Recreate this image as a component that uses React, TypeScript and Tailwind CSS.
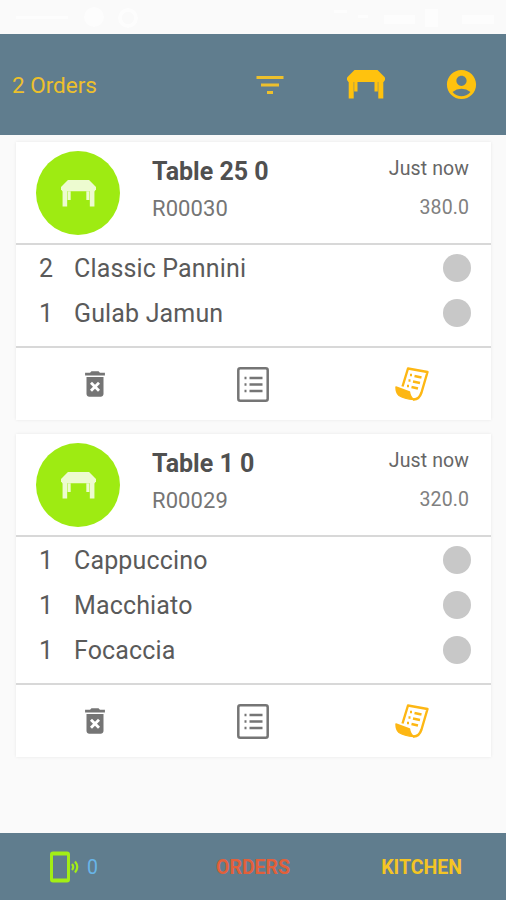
import { MdAccountCircle, MdDeleteForever, MdFilterList } from 'react-icons/md';

interface OrderItem {
  qty: number;
  name: string;
}

interface Order {
  id: string;
  table: string;
  time: string;
  total: string;
  items: OrderItem[];
}

const ORDERS: Order[] = [
  {
    id: 'R00030',
    table: 'Table 25 0',
    time: 'Just now',
    total: '380.0',
    items: [
      { qty: 2, name: 'Classic Pannini' },
      { qty: 1, name: 'Gulab Jamun' },
    ],
  },
  {
    id: 'R00029',
    table: 'Table 1 0',
    time: 'Just now',
    total: '320.0',
    items: [
      { qty: 1, name: 'Cappuccino' },
      { qty: 1, name: 'Macchiato' },
      { qty: 1, name: 'Focaccia' },
    ],
  },
];

function TableIcon({ className }: { className?: string }) {
  return (
    <svg viewBox="0 0 38 29" preserveAspectRatio="none" fill="currentColor" className={className}>
      <path d="M7.500 0h23L38 7.500V10l-1.500 2h-35L0 10V7.500z" />
      <path d="M1.700 11h5v17.500h-5zM31.300 11h5v17.500h-5zM7.200 12h3.300v9.500H7.200zM27.500 12h3.300v9.500h-3.300z" />
    </svg>
  );
}

function StatusIcons() {
  return (
    <svg viewBox="0 0 506 34" fill="#fff" className="h-[34px] w-full opacity-60">
      <path d="M16 16h52v3H16zM334 10h13v3h-13zM358 15h10v3h-10zM384 15h31v9h-31zM425 9h13v18h-13zM462 15h32v9h-32z" />
      <circle cx="94" cy="17" r="10" />
      <circle cx="128" cy="18" r="8" fill="none" stroke="#fff" strokeWidth="4" />
    </svg>
  );
}

function ListIcon() {
  return (
    <svg viewBox="0 0 32 35" className="h-[35px] w-8 text-[#757575]">
      <rect x="1.300" y="1.300" width="29.400" height="32.400" rx="2" fill="none" stroke="currentColor" strokeWidth="2.500" />
      <path
        d="M7.500 11h2M12.500 11H25.500M7.500 17.500h2M12.500 17.500H25.500M7.500 24h2M12.500 24H25.500"
        stroke="currentColor"
        strokeWidth="2.400"
      />
    </svg>
  );
}

function ReceiptIcon() {
  return (
    <svg viewBox="0 0 36 36" fill="none" stroke="currentColor" className="size-9 text-[#fdb714]">
      <path d="M8.500 20.500 14 2.500l19.500 3.500-6 20.500q-2.500 7.500-8.500 7" strokeWidth="2.400" strokeLinejoin="round" />
      <path
        d="M2 21l13.500 5q.5 5 4.500 7.500Q10 33 5 29.500 2 27 2 21z"
        fill="currentColor"
        strokeWidth="1.500"
        strokeLinejoin="round"
      />
      <path d="M16 9h2M20.500 10l7 1.500M14.500 14.500h2M19 15.500l7 1.500M13 20h2M17.500 21l6.500 1.500" strokeWidth="2.600" />
    </svg>
  );
}

function PhoneIcon() {
  return (
    <svg viewBox="0 0 30 32" fill="none" stroke="currentColor" className="h-8 w-[30px] text-[#a2ee16]">
      <rect x="1.500" y="2" width="17" height="28" rx="1.500" strokeWidth="3" />
      <path d="M1 3h18M1 29h18" strokeWidth="3" />
      <path d="M22 13q2.500 3 0 6M25 10.500q4.500 5.500 0 11" strokeWidth="2.200" />
    </svg>
  );
}

function OrderCard({ order }: { order: Order }) {
  return (
    <article className="bg-white shadow-[0_0_3px_rgba(0,0,0,0.08)]">
      <div className="flex h-[101px] pl-5 pr-[22px]">
        <div className="mt-[9px] flex size-[84px] items-center justify-center rounded-full bg-[#9eeb12]">
          <TableIcon className="h-[27px] w-[35px] text-[#edfbd0]" />
        </div>
        <div className="ml-8 flex-1 pt-[14px]">
          <h2 className="text-[25px] leading-8 font-bold text-[#505050]">{order.table}</h2>
          <p className="mt-[5px] text-[22px] leading-8 tracking-[0.1px] text-[#757575]">{order.id}</p>
        </div>
        <div className="pt-[11px] text-right">
          <p className="text-[19.500px] leading-8 tracking-[0.1px] text-[#666666]">{order.time}</p>
          <p className="mt-[7px] text-[19.500px] leading-8 tracking-[0.1px] text-[#808080]">{order.total}</p>
        </div>
      </div>
      <ul className="border-y-2 border-[#d8d8d8] pb-[11px]">
        {order.items.map((item) => (
          <li
            key={item.name}
            className="flex h-[45px] items-center pl-[23px] pr-5 text-[25px] tracking-[0.15px] text-[#5a5a5a]"
          >
            <span className="w-[35px] pt-0.5">{item.qty}</span>
            <span className="flex-1 pt-0.5">{item.name}</span>
            <span className="size-7 rounded-full bg-[#c8c8c8]" />
          </li>
        ))}
      </ul>
      <div className="grid h-[72px] grid-cols-3 place-items-center">
        <MdDeleteForever className="size-[34px] text-[#757575]" />
        <ListIcon />
        <ReceiptIcon />
      </div>
    </article>
  );
}

export default function App() {
  return (
    <div className="flex h-[900px] w-full flex-col bg-[#fafafa] font-[Roboto,sans-serif]">
      <StatusIcons />
      <header className="flex h-[101px] items-center bg-[#607d8e] pl-3 pr-[27px] text-[#ffc20e]">
        <h1 className="flex-1 pt-[3px] text-[22.500px] text-[#edc02c]">2 Orders</h1>
        <MdFilterList className="size-9 text-[#edc02c]" />
        <TableIcon className="ml-[59px] h-[29px] w-[38px]" />
        <MdAccountCircle className="ml-[59px] size-[35px]" />
      </header>
      <main className="flex flex-1 flex-col gap-[14px] pt-[7px] pr-[15px] pl-4">
        {ORDERS.map((order) => (
          <OrderCard key={order.id} order={order} />
        ))}
      </main>
      <nav className="grid h-[67px] grid-cols-3 items-center bg-[#607d8e] text-[19.500px] font-bold">
        <div className="flex items-center pl-[50px] text-[#68b5e8]">
          <PhoneIcon />
          <span className="ml-[7px] pt-0.5 font-normal">0</span>
        </div>
        <span className="pt-[3px] text-center text-[#e2603a]">ORDERS</span>
        <span className="pt-[3px] text-center text-[#f4c524]">KITCHEN</span>
      </nav>
    </div>
  );
}
